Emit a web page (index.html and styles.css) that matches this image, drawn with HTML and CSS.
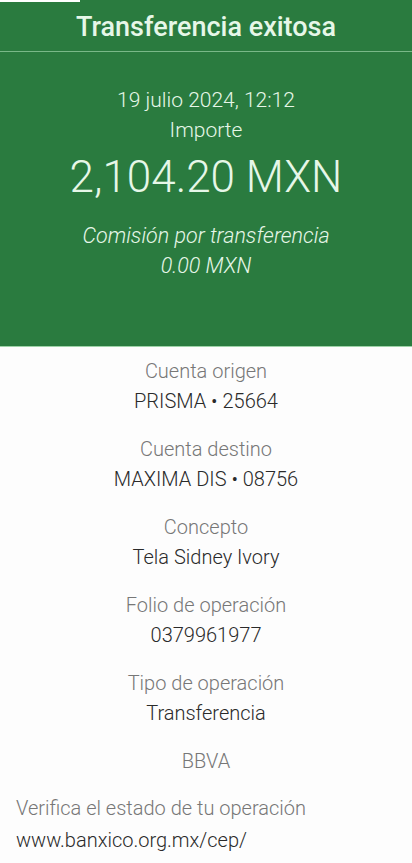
FILE: index.html
```html
<!DOCTYPE html>
<html lang="es">

<head>
    <meta charset="UTF-8">
    <meta name="viewport" content="width=device-width, initial-scale=1.0">
    <title>Transferencia exitosa</title>
    <link rel="stylesheet" href="styles.css">
</head>

<body>
    <header class="cabecera">
        <h1 class="titulo">Transferencia exitosa</h1>
        <div class="resumen">
            <p class="fecha">19 julio 2024, 12:12</p>
            <p class="etiqueta-importe">Importe</p>
            <p class="importe">2,104.20 MXN</p>
            <p class="comision">Comisión por transferencia</p>
            <p class="comision">0.00 MXN</p>
        </div>
    </header>

    <main class="detalle">
        <div class="dato">
            <p class="etiqueta">Cuenta origen</p>
            <p class="valor">PRISMA • 25664</p>
        </div>
        <div class="dato">
            <p class="etiqueta">Cuenta destino</p>
            <p class="valor">MAXIMA DIS • 08756</p>
        </div>
        <div class="dato">
            <p class="etiqueta">Concepto</p>
            <p class="valor">Tela Sidney Ivory</p>
        </div>
        <div class="dato">
            <p class="etiqueta">Folio de operación</p>
            <p class="valor">0379961977</p>
        </div>
        <div class="dato">
            <p class="etiqueta">Tipo de operación</p>
            <p class="valor">Transferencia</p>
        </div>
        <div class="dato">
            <p class="etiqueta">BBVA</p>
        </div>

        <div class="verificar">
            <p class="verificar-texto">Verifica el estado de tu operación</p>
            <p class="verificar-url">www.banxico.org.mx/cep/</p>
        </div>
    </main>
</body>

</html>
```

FILE: styles.css
```css
body {
    margin: 0;
    font-family: Roboto, "Liberation Sans", sans-serif;
    font-weight: 300;
    background-color: #fdfdfd;
}

p {
    margin: 0;
}

.cabecera {
    position: relative;
    background-color: #2a7b3f;
    color: #e6f7e8;
    text-align: center;
    border-bottom: 1px solid #9ed3a8;
}

/* franja blanca de la captura */
.cabecera::before {
    content: "";
    position: absolute;
    top: 0;
    left: 0;
    width: 80px;
    height: 2px;
    background-color: #ffffff;
}

.titulo {
    margin: 0;
    padding: 12px 0 9px;
    line-height: 30px;
    font-size: 27px;
    font-weight: 500;
    border-bottom: 1px solid #79b888;
}

.resumen {
    padding: 33px 0 65px;
}

.fecha,
.etiqueta-importe {
    font-size: 21px;
    line-height: 30px;
}

.importe {
    margin-top: 9px;
    font-size: 44px;
    line-height: 46px;
}

.comision {
    font-size: 21.5px;
    line-height: 30px;
    font-style: italic;
}

.importe + .comision {
    margin-top: 21px;
}

.detalle {
    padding-top: 9px;
    border-bottom: 1px solid #c8c8c8;
}

.dato {
    text-align: center;
    margin-bottom: 18px;
}

.etiqueta {
    font-size: 20px;
    line-height: 30px;
    color: #777777;
}

.valor {
    font-size: 20px;
    line-height: 30px;
    color: #2a2a2a;
}

.verificar {
    padding: 0 16px 7px;
    margin-top: -2px;
}

.verificar-texto {
    font-size: 20px;
    line-height: 32px;
    color: #777777;
}

.verificar-url {
    font-size: 20px;
    line-height: 32px;
    color: #2a2a2a;
}
```
